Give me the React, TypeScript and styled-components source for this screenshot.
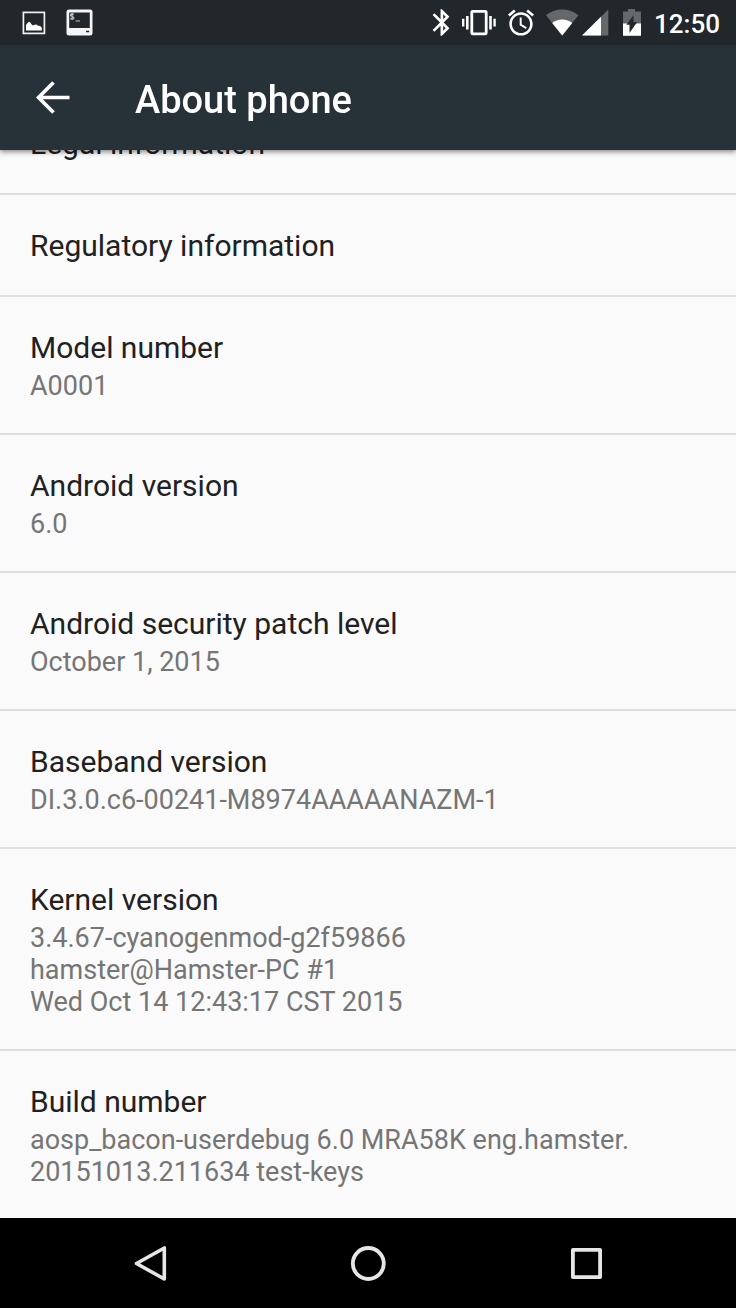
import React from "react";
import styled, { createGlobalStyle } from "styled-components";

const GlobalStyle = createGlobalStyle`
  * { box-sizing: border-box; }
  body {
    margin: 0;
    background: #fafafa;
    font-family: Roboto, "Noto Sans", sans-serif;
  }
`;

const Screen = styled.div`
  display: flex;
  flex-direction: column;
  height: 100vh;
  overflow: hidden;
`;

const StatusBar = styled.div`
  display: flex;
  flex: none;
  align-items: center;
  justify-content: space-between;
  height: 45px;
  padding: 0 16px 0 22px;
  background: #21272b;
  color: #fff;
`;

const StatusGroup = styled.div<{ $gap: number }>`
  display: flex;
  align-items: center;
  gap: ${(p) => p.$gap}px;
  svg { display: block; }
`;

const Clock = styled.time`
  padding-top: 2px;
  font-size: 26px;
  font-weight: 500;
  line-height: 32px;
`;

const AppBar = styled.header`
  position: relative;
  z-index: 1;
  display: flex;
  flex: none;
  align-items: center;
  height: 105px;
  padding: 0 30px;
  gap: 60px;
  background: #263238;
  color: #fff;
  box-shadow: 0 2px 5px rgba(0, 0, 0, 0.45);
`;

const IconButton = styled.button`
  display: flex;
  align-items: center;
  justify-content: center;
  width: 45px;
  height: 45px;
  padding: 0;
  border: 0;
  background: none;
  color: inherit;
`;

const AppTitle = styled.h1`
  margin: 0;
  padding-top: 4px;
  font-size: 38px;
  font-weight: 500;
  line-height: 44px;
`;

const Content = styled.main`
  flex: 1;
  min-height: 0;
  overflow-y: auto;
  scrollbar-width: none;
  background: #fafafa;
`;

/* The list is scrolled so that its first row sits partly under the app bar. */
const PreferenceList = styled.dl`
  margin: -57px 0 0;
`;

const Preference = styled.div<{ $single: boolean }>`
  padding: 30px 30px ${(p) => (p.$single ? 28 : 31)}px;
  border-bottom: 2px solid #dedede;
  &:last-child { border-bottom: 0; }
`;

const Title = styled.dt`
  color: #212121;
  font-size: 30px;
  line-height: 42px;
`;

const Summary = styled.dd`
  margin: 1px 0 0;
  color: #757575;
  font-size: 27px;
  line-height: 32px;
  white-space: pre-line;
`;

const NavBar = styled.nav`
  display: flex;
  flex: none;
  align-items: center;
  justify-content: center;
  gap: 128px;
  height: 90px;
  background: #000;
  color: #e6e6e6;
`;

const NavButton = styled(IconButton)`
  width: 90px;
  height: 90px;
`;

const items: { title: string; summary?: string }[] = [
  { title: "Legal information" },
  { title: "Regulatory information" },
  { title: "Model number", summary: "A0001" },
  { title: "Android version", summary: "6.0" },
  { title: "Android security patch level", summary: "October 1, 2015" },
  { title: "Baseband version", summary: "DI.3.0.c6-00241-M8974AAAAANAZM-1" },
  {
    title: "Kernel version",
    summary: "3.4.67-cyanogenmod-g2f59866\nhamster@Hamster-PC #1\nWed Oct 14 12:43:17 CST 2015",
  },
  {
    title: "Build number",
    summary: "aosp_bacon-userdebug 6.0 MRA58K eng.hamster.\n20151013.211634 test-keys",
  },
];

const PictureIcon = () => (
  <svg width="24" height="24" viewBox="0 0 24 24" aria-hidden="true">
    <rect x="1.4" y="1.4" width="21" height="21" fill="none" stroke="#f2f2f2" strokeWidth="1.7" />
    <path
      d="M4 19.5v-5.500c.6-.6 1-1.200 1.600-2 .8-1.200 2.400-1.200 3.200 0 .6.9.9 1.900 1.700 2.200.8.300 1.800-.4 2.900-.6 1.200-.2 2 .6 2.600 1.300.9-.3 2-.2 2.700.5.5.500.8 1 1.100 1.400v2.700z"
      fill="#fff"
    />
  </svg>
);

const TerminalIcon = () => (
  <svg width="27" height="27" viewBox="0 0 27 27" aria-hidden="true">
    <path
      fillRule="evenodd"
      fill="#f5f5f5"
      d="M3 .5h21a2.500 2.500 0 0 1 2.500 2.500v21a2.500 2.500 0 0 1-2.500 2.500H3A2.500 2.500 0 0 1 .5 24V3A2.500 2.500 0 0 1 3 .5zM3.200 3.500v15.500h20.600V3.500zM20 21.700v1.500h3.200v-1.500z"
    />
    <path
      d="M7.800 5.500c-.8-.9-3.300-.8-3.300.7 0 1.600 3.400 1 3.400 2.700 0 1.500-2.700 1.500-3.600.5M6.100 4v7M9.500 12h4.500"
      fill="none"
      stroke="#bfc3c5"
      strokeWidth="1.200"
    />
  </svg>
);

const BluetoothIcon = () => (
  <svg width="18" height="27" viewBox="4.600 1.800 13.500 20.400" aria-hidden="true">
    <path
      fill="#fff"
      d="M17.710 7.710L12 2h-1v7.590L6.410 5 5 6.410 10.590 12 5 17.590 6.410 19 11 14.410V22h1l5.710-5.710-4.300-4.290 4.300-4.290zM13 5.830l1.880 1.880L13 9.590V5.830zm1.880 10.460L13 18.170v-3.760l1.880 1.880z"
    />
  </svg>
);

const VibrateIcon = () => (
  <svg width="34" height="27" viewBox="0 0 34 27" aria-hidden="true">
    <rect x="9.800" y="2.300" width="14.400" height="22.600" rx="1" fill="none" stroke="#fff" strokeWidth="2.800" />
    <path fill="#fff" d="M0 9.800h2.400v7.800H0zM4 7h2.600v13.400H4zM27.200 7h2.600v13.400h-2.600zM31.400 9.800h2.400v7.800h-2.400z" />
  </svg>
);

const AlarmIcon = () => (
  <svg width="26" height="27" viewBox="2 1.500 20 20.800" aria-hidden="true">
    <path
      fill="#fff"
      d="M22 5.720l-4.600-3.860-1.290 1.530 4.600 3.860L22 5.720zM7.880 3.390L6.600 1.860 2 5.710l1.290 1.530 4.590-3.850zM12.500 8H11v6l4.750 2.850.75-1.230-4-2.370V8zM12 4c-4.970 0-9 4.030-9 9s4.020 9 9 9c4.970 0 9-4.030 9-9s-4.030-9-9-9zm0 16c-3.870 0-7-3.130-7-7s3.130-7 7-7 7 3.130 7 7-3.130 7-7 7z"
    />
  </svg>
);

const SignalIcons = () => (
  <svg width="64" height="27" viewBox="0 0 64 27" aria-hidden="true">
    <path fill="#64686b" d="M16.200 26.500L0 6.200C4.500 2.500 10 .6 16.200 .6S28 2.500 32.400 6.200z" />
    <path fill="#fff" d="M16.200 26.500L6.200 14C9 11.800 12.300 10.600 16.200 10.600S23.400 11.800 26.200 14z" />
    <path fill="#64686b" d="M62.300 .5v26H36z" />
    <path fill="#fff" d="M55 7.700v18.800H36z" />
  </svg>
);

const BatteryIcon = () => (
  <svg width="20" height="27" viewBox="0 0 20 27" aria-hidden="true">
    <path fill="#64686b" d="M6 0h7v2.500h6V15H1V2.500h5z" />
    <path fill="#fff" d="M1 14.500h18v12.300H1z" />
    <path fill="#21272b" d="M11.500 6.300V13h3.700L7.500 24v-8.200H4.300z" />
  </svg>
);

export default function App() {
  return (
    <Screen>
      <GlobalStyle />
      <StatusBar>
        <StatusGroup $gap={20}>
          <PictureIcon />
          <TerminalIcon />
        </StatusGroup>
        <StatusGroup $gap={12}>
          <BluetoothIcon />
          <VibrateIcon />
          <AlarmIcon />
          <SignalIcons />
          <BatteryIcon />
          <Clock>12:50</Clock>
        </StatusGroup>
      </StatusBar>
      <AppBar>
        <IconButton aria-label="Navigate up">
          <svg width="34" height="34" viewBox="0 0 34 34" aria-hidden="true">
            <path d="M17.500 1.500L2.500 16.500l15 15M2.500 16.500h31" fill="none" stroke="#fff" strokeWidth="3.700" />
          </svg>
        </IconButton>
        <AppTitle>About phone</AppTitle>
      </AppBar>
      <Content>
        <PreferenceList>
          {items.map((item) => (
            <Preference key={item.title} $single={!item.summary}>
              <Title>{item.title}</Title>
              {item.summary && <Summary>{item.summary}</Summary>}
            </Preference>
          ))}
        </PreferenceList>
      </Content>
      <NavBar aria-label="System">
        <NavButton aria-label="Back">
          <svg width="36" height="36" viewBox="0 0 36 36" aria-hidden="true">
            <path
              d="M32.300 3v31L4.500 18.500z"
              fill="none"
              stroke="currentColor"
              strokeWidth="3.600"
              strokeLinejoin="round"
            />
          </svg>
        </NavButton>
        <NavButton aria-label="Home">
          <svg width="36" height="36" viewBox="0 0 36 36" aria-hidden="true">
            <circle cx="18.300" cy="18.500" r="15.500" fill="none" stroke="currentColor" strokeWidth="3.800" />
          </svg>
        </NavButton>
        <NavButton aria-label="Recent apps">
          <svg width="36" height="36" viewBox="0 0 36 36" aria-hidden="true">
            <rect
              x="4.900"
              y="4.900"
              width="27.200"
              height="27.200"
              fill="none"
              stroke="currentColor"
              strokeWidth="3.800"
              strokeLinejoin="round"
            />
          </svg>
        </NavButton>
      </NavBar>
    </Screen>
  );
}
